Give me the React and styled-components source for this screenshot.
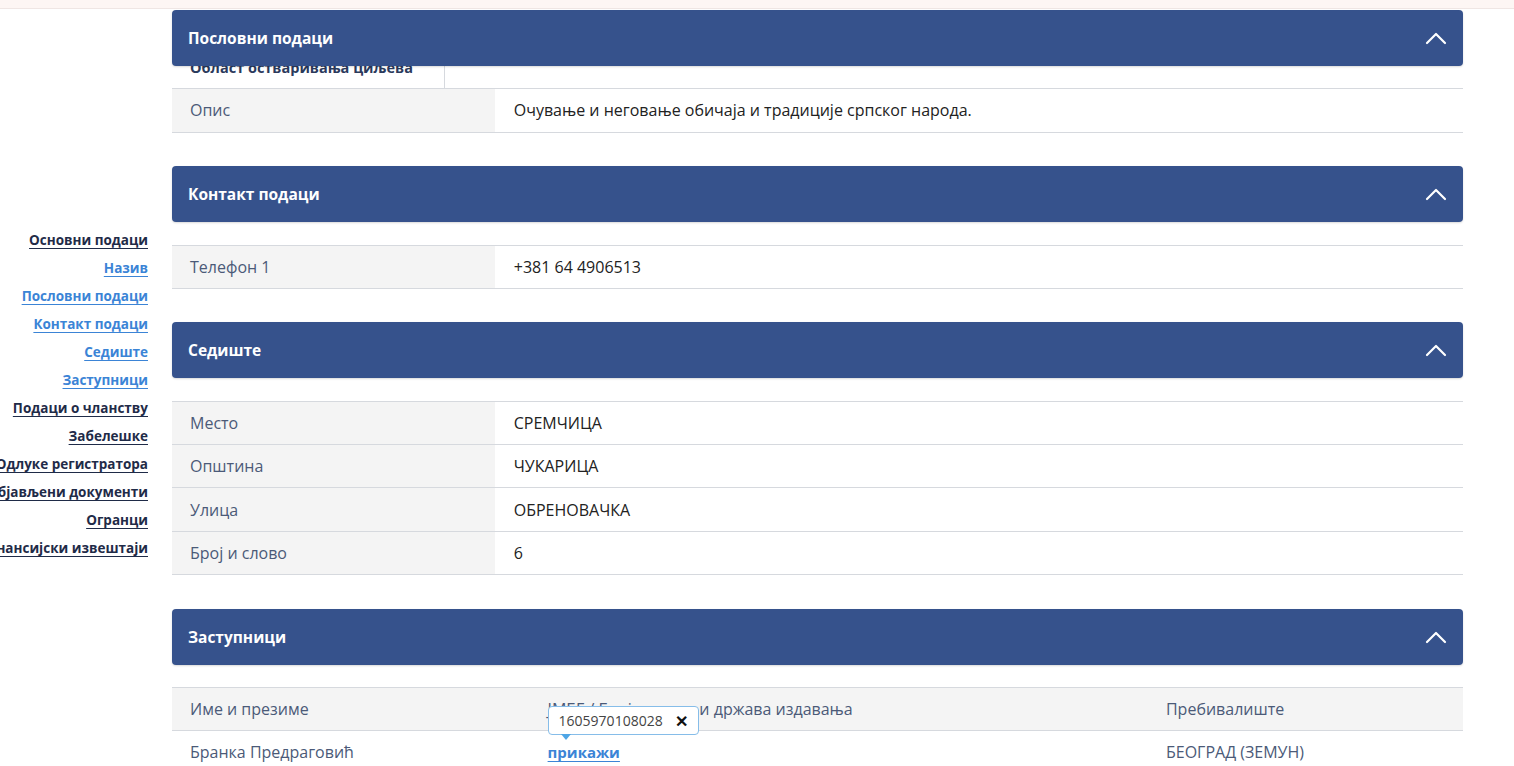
import React from "react";
import styled, { createGlobalStyle } from "styled-components";

const GlobalStyle = createGlobalStyle`
  html, body {
    margin: 0;
    padding: 0;
    background: #ffffff;
    overflow: hidden;
  }
  body {
    font-family: "Open Sans", "Noto Sans", sans-serif;
    color: #222;
  }
`;

const TopStrip = styled.div`
  height: 8px;
  background-color: #fdf6f4;
  border-bottom: 1px solid #efe6e4;
`;

const Page = styled.div`
  display: grid;
  grid-template-columns: 148px 1291px 1fr;
  column-gap: 24px;
  padding-top: 1px;
`;

const SideNav = styled.nav`
  display: flex;
  flex-direction: column;
  align-items: flex-end;
  gap: 9px;
  padding-top: 221px;
`;

const NavLink = styled.a`
  display: block;
  white-space: nowrap;
  font-size: 13.5px;
  font-weight: 700;
  line-height: 19px;
  text-decoration: underline;
  text-underline-offset: 3px;
  color: ${(p) => (p.$active ? "#3b84d6" : "#1f2b48")};
  cursor: pointer;
`;

const Main = styled.main`
  display: flex;
  flex-direction: column;
`;

const Section = styled.section`
  margin-bottom: 33.6px;
`;

const SectionHeader = styled.div`
  position: relative;
  z-index: 2;
  height: 56px;
  display: flex;
  align-items: center;
  justify-content: space-between;
  padding: 0 16px;
  background-color: #36528c;
  border-radius: 4px;
  color: #fff;
  font-size: 15.5px;
  font-weight: 700;
  box-shadow: 0 1px 2px rgba(0, 0, 0, 0.15);
`;

const Body = styled.div`
  margin-top: ${(p) => (p.$under ? "-20px" : "22.5px")};
  border-top: ${(p) => (p.$under ? "none" : "1px solid #d6d9de")};
`;

const Row = styled.div`
  display: grid;
  grid-template-columns: ${(p) => p.$cols || "25% 75%"};
  border-bottom: 1px solid #d6d9de;
  min-height: 42.25px;
  background: ${(p) => (p.$head ? "#f4f4f4" : "#fff")};
`;

const Label = styled.div`
  display: flex;
  align-items: center;
  padding-left: 18px;
  font-size: 16px;
  color: #4b5a78;
  background: #f4f4f4;
`;

const Value = styled.div`
  display: flex;
  align-items: center;
  padding-left: 19px;
  font-size: 16px;
  color: #222;
`;

const GoalLabel = styled.div`
  display: flex;
  align-items: center;
  padding-left: 18px;
  font-size: 14.5px;
  font-weight: 700;
  color: #2b3a5c;
  border-right: 1px solid #d6d9de;
`;

const Cell = styled.div`
  position: relative;
  display: flex;
  align-items: center;
  padding-left: 18px;
  font-size: 16px;
  color: ${(p) => (p.$muted ? "#4b5a78" : "#2a2a2a")};
  white-space: nowrap;
`;

const ShowLink = styled.a`
  color: #3b84d6;
  font-weight: 700;
  font-size: 15px;
  text-decoration: underline;
  text-underline-offset: 3px;
  cursor: pointer;
`;

const Tooltip = styled.div`
  position: absolute;
  left: 18px;
  top: -25px;
  z-index: 3;
  display: flex;
  align-items: center;
  gap: 12px;
  height: 27px;
  padding: 0 10px;
  background: #fff;
  border: 1px solid #86bde9;
  border-radius: 4px;
  font-size: 14px;
  color: #444;

  &::after {
    content: "";
    position: absolute;
    left: 12px;
    bottom: -6px;
    border-left: 5px solid transparent;
    border-right: 5px solid transparent;
    border-top: 6px solid #4ea6e6;
  }
`;

const Close = styled.span`
  font-size: 16px;
  font-weight: 800;
  color: #111;
  line-height: 1;
`;

function Chevron() {
  return (
    <svg width="22" height="14" viewBox="0 0 22 14" fill="none">
      <path d="M2 12 L11 3 L20 12" stroke="#fff" strokeWidth="2.2" strokeLinecap="round" strokeLinejoin="round" />
    </svg>
  );
}

function Header({ title }) {
  return (
    <SectionHeader>
      <span>{title}</span>
      <Chevron />
    </SectionHeader>
  );
}

const navItems = [
  { label: "Основни подаци" },
  { label: "Назив", active: true },
  { label: "Пословни подаци", active: true },
  { label: "Контакт подаци", active: true },
  { label: "Седиште", active: true },
  { label: "Заступници", active: true },
  { label: "Подаци о чланству" },
  { label: "Забелешке" },
  { label: "Одлуке регистратора" },
  { label: "Објављени документи" },
  { label: "Огранци" },
  { label: "Финансијски извештаји" },
];

const seat = [
  ["Место", "СРЕМЧИЦА"],
  ["Општина", "ЧУКАРИЦА"],
  ["Улица", "ОБРЕНОВАЧКА"],
  ["Број и слово", "6"],
];

const repCols = "27.7% 47.9% 24.4%";

export default function App() {
  return (
    <>
      <GlobalStyle />
      <TopStrip />
      <Page>
        <SideNav>
          {navItems.map((n) => (
            <NavLink key={n.label} $active={n.active}>
              {n.label}
            </NavLink>
          ))}
        </SideNav>
        <Main>
          <Section>
            <Header title="Пословни подаци" />
            <Body $under>
              <Row $cols="273px 1fr">
                <GoalLabel>Област остваривања циљева</GoalLabel>
                <div />
              </Row>
              <Row>
                <Label>Опис</Label>
                <Value>Очување и неговање обичаја и традиције српског народа.</Value>
              </Row>
            </Body>
          </Section>

          <Section>
            <Header title="Контакт подаци" />
            <Body>
              <Row>
                <Label>Телефон 1</Label>
                <Value>+381 64 4906513</Value>
              </Row>
            </Body>
          </Section>

          <Section>
            <Header title="Седиште" />
            <Body>
              {seat.map(([l, v]) => (
                <Row key={l}>
                  <Label>{l}</Label>
                  <Value>{v}</Value>
                </Row>
              ))}
            </Body>
          </Section>

          <Section>
            <Header title="Заступници" />
            <Body>
              <Row $cols={repCols} $head>
                <Cell $muted>Име и презиме</Cell>
                <Cell $muted>ЈМБГ / Број пасоша и држава издавања</Cell>
                <Cell $muted>Пребивалиште</Cell>
              </Row>
              <Row $cols={repCols}>
                <Cell $muted>Бранка Предраговић</Cell>
                <Cell>
                  <Tooltip>
                    <span>1605970108028</span>
                    <Close>✕</Close>
                  </Tooltip>
                  <ShowLink>прикажи</ShowLink>
                </Cell>
                <Cell $muted>БЕОГРАД (ЗЕМУН)</Cell>
              </Row>
            </Body>
          </Section>
        </Main>
        <div />
      </Page>
    </>
  );
}
